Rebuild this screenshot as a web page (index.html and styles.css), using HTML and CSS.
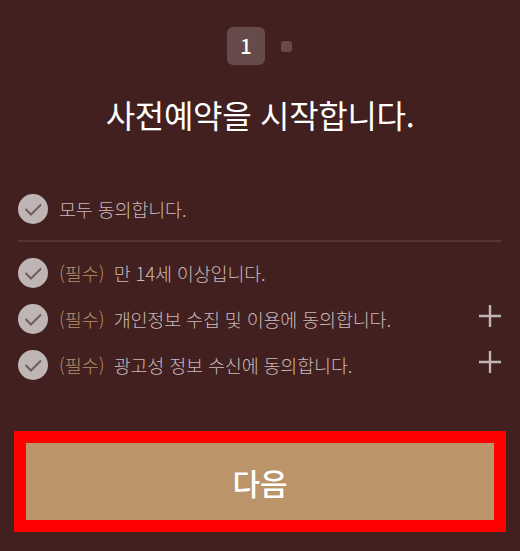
FILE: index.html
```html
<!DOCTYPE html>
<html lang="ko">
<head>
    <meta charset="UTF-8">
    <meta name="viewport" content="width=device-width, initial-scale=1.0">
    <title>사전예약</title>
    <link rel="stylesheet" href="styles.css">
</head>
<body>
    <div class="steps">
        <div class="step-current">1</div>
        <div class="step-next"></div>
    </div>

    <h1 class="title">사전예약을 시작합니다.</h1>

    <div class="agree-all">
        <div class="agree-row">
            <svg class="check" viewBox="0 0 30 30"><circle cx="15" cy="15" r="15" fill="#bfb5b5"/><path d="M7.5 15l5.5 5.5 10-10" fill="none" stroke="#6f5c5c" stroke-width="2"/></svg>
            <span class="agree-text">모두 동의합니다.</span>
        </div>
    </div>

    <div class="agree-list">
        <div class="agree-row">
            <svg class="check" viewBox="0 0 30 30"><circle cx="15" cy="15" r="15" fill="#bfb5b5"/><path d="M7.5 15l5.5 5.5 10-10" fill="none" stroke="#6f5c5c" stroke-width="2"/></svg>
            <span class="required">(필수)</span>
            <span class="agree-text">만 14세 이상입니다.</span>
        </div>
        <div class="agree-row">
            <svg class="check" viewBox="0 0 30 30"><circle cx="15" cy="15" r="15" fill="#bfb5b5"/><path d="M7.5 15l5.5 5.5 10-10" fill="none" stroke="#6f5c5c" stroke-width="2"/></svg>
            <span class="required">(필수)</span>
            <span class="agree-text">개인정보 수집 및 이용에 동의합니다.</span>
            <svg class="plus" viewBox="0 0 22 22"><path d="M0 11h22M11 0v22" stroke="#bfb5b5" stroke-width="2.4"/></svg>
        </div>
        <div class="agree-row">
            <svg class="check" viewBox="0 0 30 30"><circle cx="15" cy="15" r="15" fill="#bfb5b5"/><path d="M7.5 15l5.5 5.5 10-10" fill="none" stroke="#6f5c5c" stroke-width="2"/></svg>
            <span class="required">(필수)</span>
            <span class="agree-text">광고성 정보 수신에 동의합니다.</span>
            <svg class="plus" viewBox="0 0 22 22"><path d="M0 11h22M11 0v22" stroke="#bfb5b5" stroke-width="2.4"/></svg>
        </div>
    </div>

    <div class="next-box">
        <button class="next-button">다음</button>
    </div>
</body>
</html>
```

FILE: styles.css
```css
* {
    margin: 0;
    padding: 0;
    box-sizing: border-box;
}

body {
    font-family: "Noto Sans CJK KR", "Noto Sans", sans-serif;
    background-color: #41201f;
    width: 520px;
    height: 551px;
    overflow: hidden;
}

.steps {
    display: flex;
    align-items: center;
    justify-content: center;
    gap: 16px;
    padding-top: 27px;
    padding-right: 1px;
}

.step-current {
    width: 38px;
    height: 38px;
    border-radius: 6px;
    background: #674b4b;
    color: #fff;
    font-size: 20px;
    font-weight: 500;
    line-height: 38px;
    text-align: center;
}

.step-next {
    width: 11px;
    height: 11px;
    border-radius: 3px;
    background: #674b4b;
}

.title {
    margin-top: 27px;
    color: #fff;
    font-size: 32px;
    font-weight: 400;
    line-height: 44px;
    letter-spacing: -0.3px;
    text-align: center;
}

.agree-all {
    margin: 58px 19px 0 18px;
    padding-bottom: 16px;
    border-bottom: 2px solid #553533;
}

.agree-list {
    margin: 16px 19px 0 18px;
    display: flex;
    flex-direction: column;
    gap: 16px;
}

.agree-row {
    position: relative;
    display: flex;
    align-items: center;
    height: 30px;
    font-size: 18.5px;
    font-weight: 300;
}

.check {
    width: 30px;
    height: 30px;
    flex-shrink: 0;
    margin-right: 11px;
}

.required {
    color: #b88e6a;
    margin-right: 9px;
}

.agree-text {
    color: #c9bab8;
    letter-spacing: -0.17px;
}

.plus {
    position: absolute;
    right: 0;
    top: 1px;
    width: 22px;
    height: 22px;
}

.next-box {
    margin: 51px 14px 0;
    border: 12px solid #ff0000;
}

.next-button {
    display: block;
    width: 100%;
    height: 77px;
    border: none;
    background: #bb9469;
    color: #fff;
    font-family: inherit;
    font-size: 30px;
    font-weight: 500;
}
```
